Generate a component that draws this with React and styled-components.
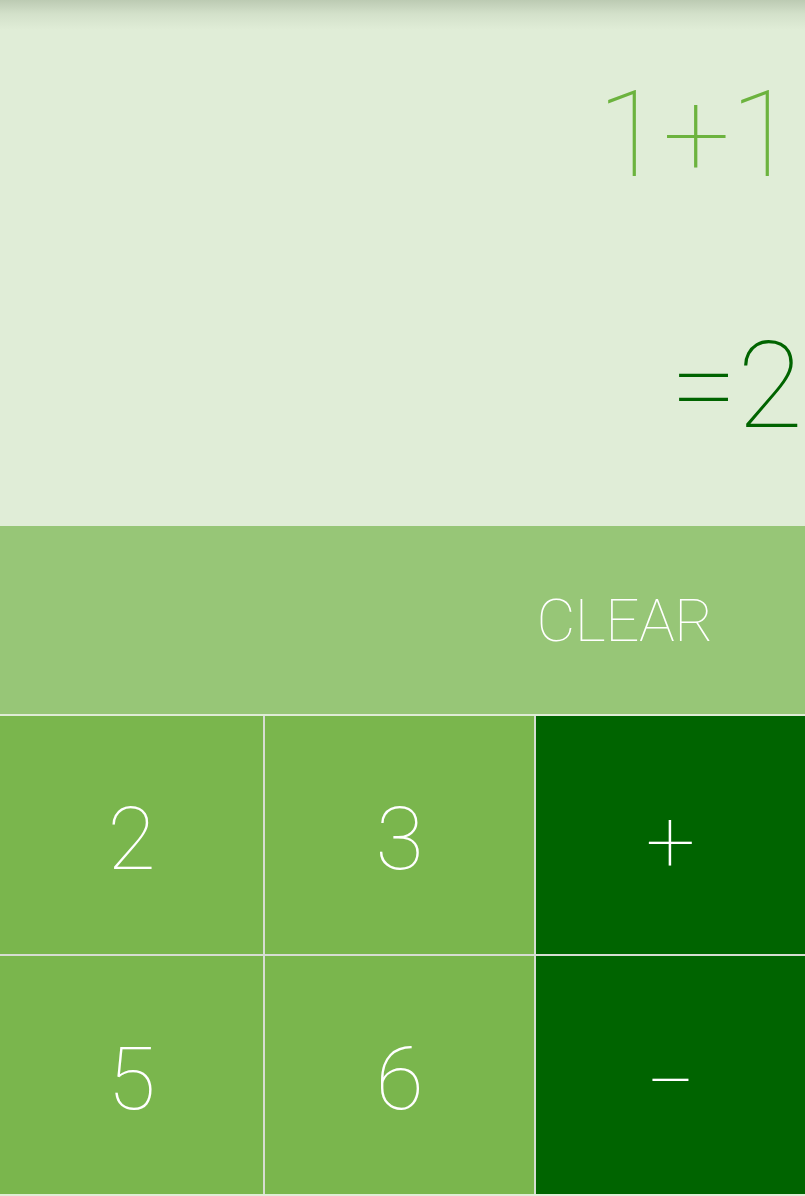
import React from "react";
import styled, { createGlobalStyle } from "styled-components";

const GlobalStyle = createGlobalStyle`
  html, body {
    margin: 0;
    padding: 0;
    background: #e0edd7;
  }
  body {
    font-family: Roboto, "Noto Sans", sans-serif;
  }
`;

const keys = [
  { label: "2", op: false },
  { label: "3", op: false },
  { label: "+", op: true },
  { label: "5", op: false },
  { label: "6", op: false },
  { label: "\u2212", op: true },
];

const App = () => {
  return (
    <>
      <GlobalStyle />
      <Wrapper>
        <Display>
          <Expression>1+1</Expression>
          <Result>=2</Result>
        </Display>
        <ClearBar>
          <ClearButton>CLEAR</ClearButton>
        </ClearBar>
        <Pad>
          {keys.map((k) => (
            <Key key={k.label} $op={k.op}>
              {k.label}
            </Key>
          ))}
        </Pad>
      </Wrapper>
    </>
  );
};

const Wrapper = styled.div`
  width: 805px;
  height: 1196px;
  display: flex;
  flex-direction: column;
  background: #e0edd7;
  overflow: hidden;
`;

const Display = styled.div`
  height: 526px;
  box-sizing: border-box;
  padding-top: 65px;
  display: flex;
  flex-direction: column;
  align-items: flex-end;
  background: linear-gradient(
      to bottom,
      rgba(60, 80, 50, 0.22) 0px,
      rgba(60, 80, 50, 0.08) 14px,
      rgba(60, 80, 50, 0) 30px
    ),
    #e0edd7;
`;

const Expression = styled.div`
  font-size: 120px;
  line-height: 140px;
  height: 140px;
  font-weight: 100;
  color: #6cb33e;
  padding-right: 9px;
`;

const Result = styled.div`
  margin-top: 111px;
  font-size: 120px;
  line-height: 140px;
  height: 140px;
  font-weight: 100;
  color: #006400;
  padding-right: 2px;
`;

const ClearBar = styled.div`
  height: 188px;
  background: #97c677;
  border-bottom: 2px solid #dfecd6;
  display: flex;
  align-items: center;
  justify-content: flex-end;
  padding-right: 92px;
`;

const ClearButton = styled.div`
  font-size: 60px;
  font-weight: 100;
  color: #ffffff;
  letter-spacing: -0.5px;
`;

const Pad = styled.div`
  display: grid;
  grid-template-columns: 263px 1fr 1fr;
  grid-template-rows: 238px 238px;
  gap: 2px;
  background: #d6ddd2;
`;

const Key = styled.div`
  display: flex;
  align-items: center;
  justify-content: center;
  box-sizing: border-box;
  padding-top: ${(p) => (p.$op ? "12px" : "6px")};
  font-size: 88px;
  font-weight: 100;
  color: #ffffff;
  background: ${(p) => (p.$op ? "#006400" : "#7ab64d")};
`;

export default App;
